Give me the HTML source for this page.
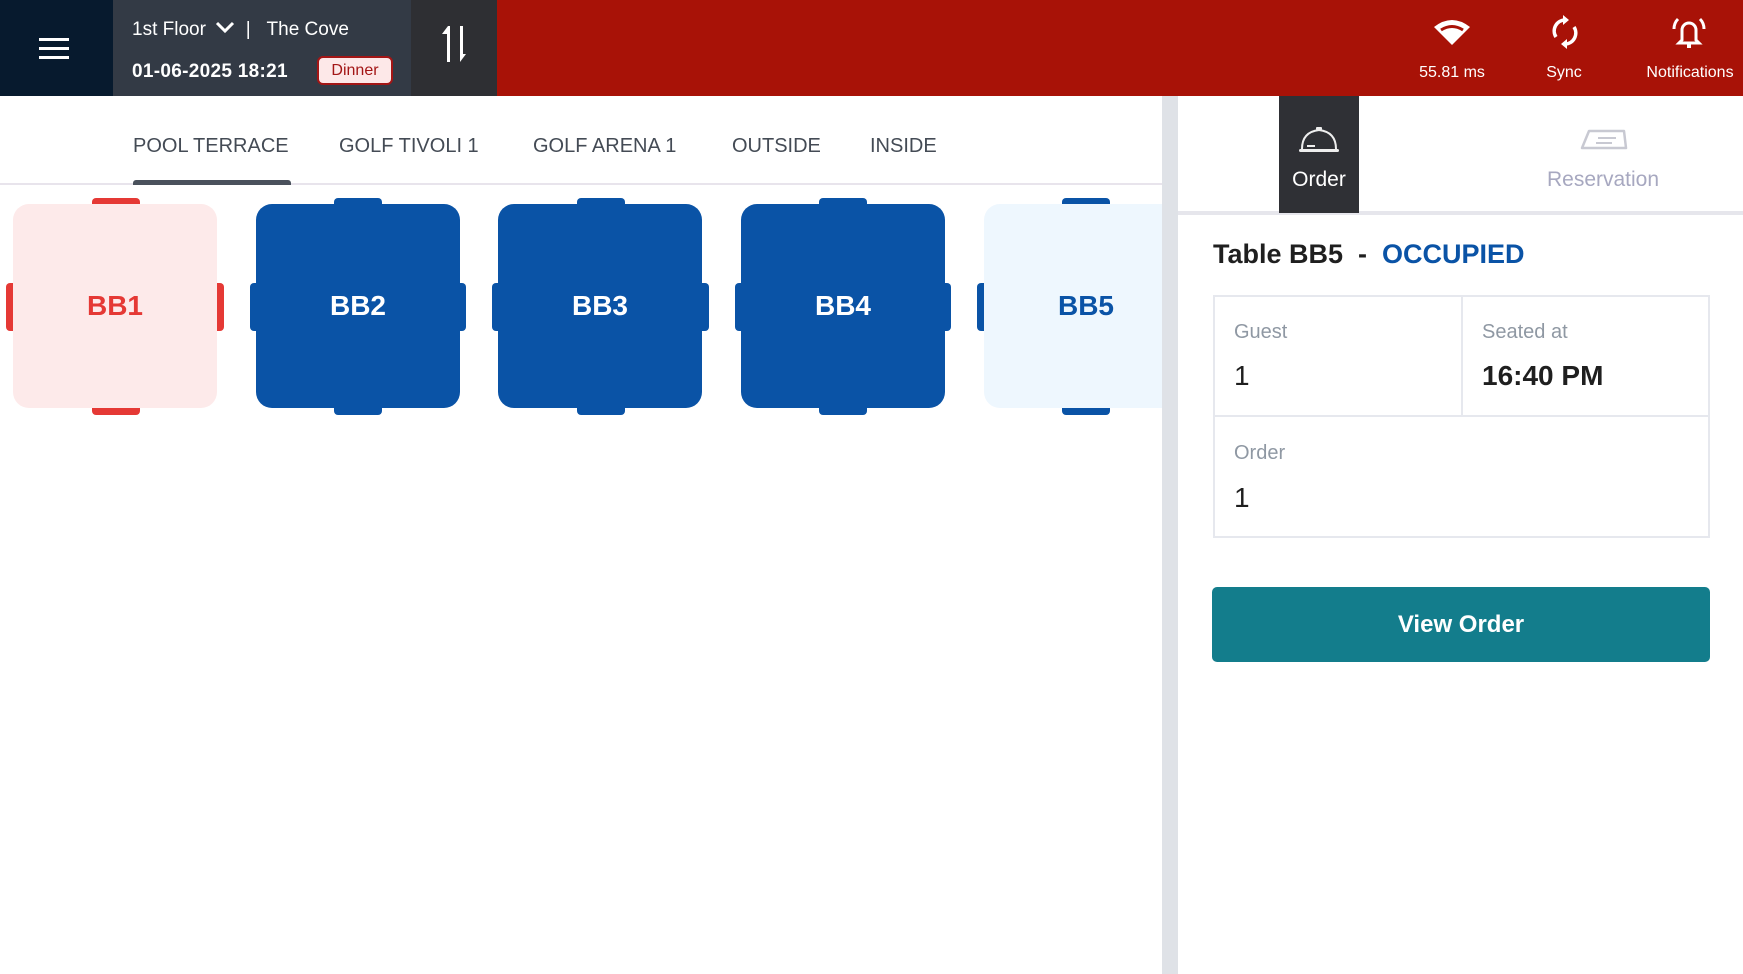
<!DOCTYPE html>
<html><head><meta charset="utf-8"><style>
*{margin:0;padding:0;box-sizing:border-box}
body{width:1743px;height:974px;overflow:hidden;background:#fff;font-family:"Liberation Sans",sans-serif;position:relative}
.a{position:absolute}
.hdr{left:0;top:0;width:1743px;height:96px;background:#a81207}
.t{position:absolute;border-radius:16px;width:204px;height:204px;top:204px;display:flex;align-items:center;justify-content:center;font-size:28px;font-weight:bold}
.ch{position:absolute;border-radius:4px}
.tab{position:absolute;top:135px;font-size:20px;color:#444b55;white-space:nowrap}
.ico{position:absolute;color:#fff;font-size:16px;text-align:center}
</style></head><body>
<div class="a hdr"></div>
<div class="a" style="left:0;top:0;width:113px;height:96px;background:#071a2e"></div>
<div class="a" style="left:39px;top:38px;width:30px;height:3px;background:#fff"></div>
<div class="a" style="left:39px;top:47px;width:30px;height:3px;background:#fff"></div>
<div class="a" style="left:39px;top:56px;width:30px;height:3px;background:#fff"></div>
<div class="a" style="left:113px;top:0;width:298px;height:96px;background:#333a45"></div>
<div class="a" style="left:132px;top:19px;color:#fff;font-size:19px;white-space:nowrap">1st Floor <svg width="20" height="14" viewBox="0 0 20 14" style="vertical-align:1px;margin-left:4px"><path d="M2 3l8 8 8-8" stroke="#fff" stroke-width="3" fill="none"/></svg> &nbsp;| &nbsp;&nbsp;The Cove</div>
<div class="a" style="left:132px;top:61px;color:#fff;font-size:19px;font-weight:bold;letter-spacing:0.3px">01-06-2025 18:21</div>
<div class="a" style="left:317px;top:56px;width:76px;height:29px;background:#fde8e8;border:2px solid #a31515;border-radius:6px;color:#a31515;font-size:16px;text-align:center;line-height:25px">Dinner</div>
<div class="a" style="left:411px;top:0;width:86px;height:96px;background:#2e2f33"></div>
<svg class="a" style="left:438px;top:24px" width="34" height="40" viewBox="0 0 34 40"><path d="M10 2L4 10h5v28h3V2z M22 2v36l6-8h-3V2z" fill="#fff"/></svg>
<svg class="a" style="left:1432px;top:17px" width="40" height="30" viewBox="0 0 40 30"><path d="M2 10Q20-4 38 10L20 28z" fill="#fff"/><path d="M9 13Q20 6 31 13" stroke="#a81207" stroke-width="3" fill="none"/></svg>
<div class="ico" style="left:1402px;top:64px;width:100px">55.81 ms</div>
<svg class="a" style="left:1550px;top:15px" width="30" height="34" viewBox="0 0 30 34"><path d="M15 5a11 11 0 0 0-9 17M15 29a11 11 0 0 0 9-17" stroke="#fff" stroke-width="3.5" fill="none"/><path d="M13 0l6 5-6 5zM17 24l-6 5 6 5z" fill="#fff"/></svg>
<div class="ico" style="left:1514px;top:64px;width:100px">Sync</div>
<svg class="a" style="left:1672px;top:14px" width="34" height="36" viewBox="0 0 34 36"><path d="M10 26V16a7 7 0 0 1 14 0v10l3 3H7z" stroke="#fff" stroke-width="3" fill="none"/><rect x="15" y="30" width="4" height="4" fill="#fff"/><path d="M6 5Q2 9 2 15M28 5Q32 9 32 15" stroke="#fff" stroke-width="3" fill="none"/></svg>
<div class="ico" style="left:1628px;top:64px;width:124px">Notifications</div>

<div class="tab" style="left:133px">POOL TERRACE</div>
<div class="tab" style="left:339px">GOLF TIVOLI 1</div>
<div class="tab" style="left:533px">GOLF ARENA 1</div>
<div class="tab" style="left:732px">OUTSIDE</div>
<div class="tab" style="left:870px">INSIDE</div>
<div class="a" style="left:0;top:183px;width:1162px;height:2px;background:#e8e4ec"></div>
<div class="a" style="left:133px;top:180px;width:158px;height:5px;background:#4a515c;border-radius:3px 3px 0 0"></div>

<div class="ch" style="left:92px;top:198px;width:48px;height:14px;background:#e53935"></div>
<div class="ch" style="left:92px;top:401px;width:48px;height:14px;background:#e53935"></div>
<div class="ch" style="left:6px;top:283px;width:14px;height:48px;background:#e53935"></div>
<div class="ch" style="left:210px;top:283px;width:14px;height:48px;background:#e53935"></div>
<div class="t" style="left:13px;background:#fdeaea;color:#e53935">BB1</div>

<div class="ch" style="left:334px;top:198px;width:48px;height:14px;background:#0a53a6"></div>
<div class="ch" style="left:334px;top:401px;width:48px;height:14px;background:#0a53a6"></div>
<div class="ch" style="left:250px;top:283px;width:14px;height:48px;background:#0a53a6"></div>
<div class="ch" style="left:452px;top:283px;width:14px;height:48px;background:#0a53a6"></div>
<div class="t" style="left:256px;background:#0a53a6;color:#fff">BB2</div>

<div class="ch" style="left:577px;top:198px;width:48px;height:14px;background:#0a53a6"></div>
<div class="ch" style="left:577px;top:401px;width:48px;height:14px;background:#0a53a6"></div>
<div class="ch" style="left:492px;top:283px;width:14px;height:48px;background:#0a53a6"></div>
<div class="ch" style="left:695px;top:283px;width:14px;height:48px;background:#0a53a6"></div>
<div class="t" style="left:498px;background:#0a53a6;color:#fff">BB3</div>

<div class="ch" style="left:819px;top:198px;width:48px;height:14px;background:#0a53a6"></div>
<div class="ch" style="left:819px;top:401px;width:48px;height:14px;background:#0a53a6"></div>
<div class="ch" style="left:735px;top:283px;width:14px;height:48px;background:#0a53a6"></div>
<div class="ch" style="left:937px;top:283px;width:14px;height:48px;background:#0a53a6"></div>
<div class="t" style="left:741px;background:#0a53a6;color:#fff">BB4</div>

<div class="ch" style="left:1062px;top:198px;width:48px;height:14px;background:#0a53a6"></div>
<div class="ch" style="left:1062px;top:401px;width:48px;height:14px;background:#0a53a6"></div>
<div class="ch" style="left:977px;top:283px;width:14px;height:48px;background:#0a53a6"></div>
<div class="t" style="left:984px;background:#eef7fe;color:#0a53a6">BB5</div>

<div class="a" style="left:1162px;top:96px;width:16px;height:878px;background:#dfe2e7"></div>
<div class="a" style="left:1178px;top:96px;width:565px;height:878px;background:#fff"></div>
<div class="a" style="left:1178px;top:211px;width:565px;height:4px;background:#e6e6ec"></div>
<div class="a" style="left:1279px;top:96px;width:80px;height:117px;background:#2f3035"></div>
<svg class="a" style="left:1298px;top:124px" width="42" height="30" viewBox="0 0 42 30"><path d="M4 25Q4 8 21 6Q38 8 38 25" stroke="#eee" stroke-width="2" fill="none"/><rect x="18" y="3" width="6" height="3" rx="1" fill="#eee"/><rect x="1" y="25" width="40" height="3" rx="1.5" fill="#eee"/><path d="M9 22h8" stroke="#eee" stroke-width="2"/></svg>
<div class="a" style="left:1279px;top:168px;width:80px;text-align:center;color:#fff;font-size:21px">Order</div>
<svg class="a" style="left:1580px;top:128px" width="48" height="24" viewBox="0 0 48 24"><path d="M2 20L9 3h35l2 17z M2 20h44" stroke="#c8c9d2" stroke-width="2.5" fill="none" stroke-linejoin="round"/><path d="M18 10h18M16 15h16" stroke="#c8c9d2" stroke-width="2"/></svg>
<div class="a" style="left:1503px;top:168px;width:200px;text-align:center;color:#a7a8c0;font-size:21px">Reservation</div>

<div class="a" style="left:1213px;top:239px;font-size:27px;color:#1f1f1f;font-weight:bold;white-space:nowrap">Table BB5 &nbsp;- &nbsp;<span style="color:#0a53a6">OCCUPIED</span></div>
<div class="a" style="left:1213px;top:295px;width:497px;height:243px;border:2px solid #e6e8ee"></div>
<div class="a" style="left:1461px;top:295px;width:2px;height:122px;background:#e6e8ee"></div>
<div class="a" style="left:1213px;top:415px;width:497px;height:2px;background:#e6e8ee"></div>
<div class="a" style="left:1234px;top:321px;font-size:20px;color:#8f98a3">Guest</div>
<div class="a" style="left:1234px;top:360px;font-size:28px;color:#1f1f1f">1</div>
<div class="a" style="left:1482px;top:321px;font-size:20px;color:#8f98a3">Seated at</div>
<div class="a" style="left:1482px;top:360px;font-size:28px;color:#1f1f1f;font-weight:bold">16:40 PM</div>
<div class="a" style="left:1234px;top:442px;font-size:20px;color:#8f98a3">Order</div>
<div class="a" style="left:1234px;top:482px;font-size:28px;color:#1f1f1f">1</div>
<div class="a" style="left:1212px;top:587px;width:498px;height:75px;background:#137d8c;border-radius:5px;color:#fff;font-size:24px;font-weight:bold;text-align:center;line-height:75px">View Order</div>
</body></html>
